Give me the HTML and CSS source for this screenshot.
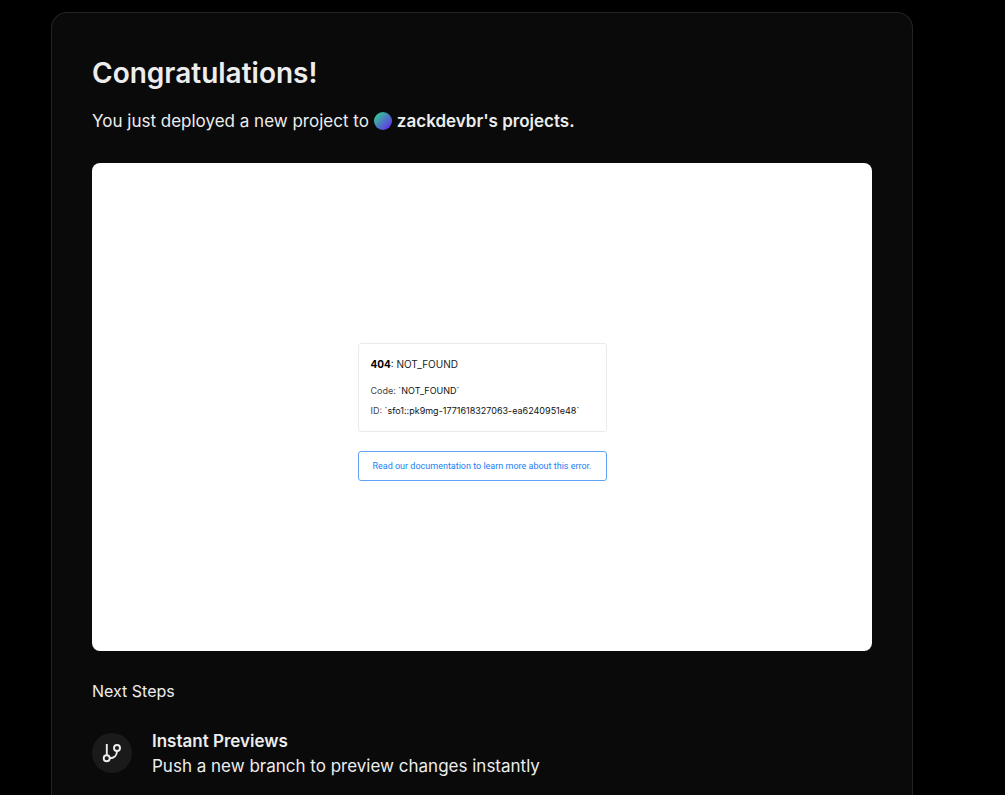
FILE: index.html
```html
<!DOCTYPE html>
<html lang="en">
<head>
<meta charset="utf-8">
<meta name="viewport" content="width=device-width, initial-scale=1">
<title>Congratulations!</title>
<link rel="stylesheet" href="styles.css">
</head>
<body>
<main class="card">
  <h1 class="title">Congratulations!</h1>
  <p class="lead">
    <span>You just deployed a new project to</span>
    <span class="avatar" aria-hidden="true"></span>
    <strong class="team">zackdevbr's projects.</strong>
  </p>
  <section class="preview">
    <div class="error">
      <div class="error-box">
        <p class="error-title"><b>404</b>: NOT_FOUND</p>
        <p class="error-line">Code: <code>`NOT_FOUND`</code></p>
        <p class="error-line">ID: <code>`sfo1::pk9mg-1771618327063-ea6240951e48`</code></p>
      </div>
      <a class="error-link" href="#">Read our documentation to learn more about this error.</a>
    </div>
  </section>
  <h2 class="subtitle">Next Steps</h2>
  <a class="step" href="#">
    <span class="step-icon">
      <svg viewBox="0 0 40 40" width="40" height="40" fill="none" stroke="currentColor" stroke-width="1.9" aria-hidden="true">
        <path d="M14.800 11v11"/>
        <circle cx="14.700" cy="25.200" r="3"/>
        <circle cx="25" cy="15" r="3"/>
        <path d="M17.700 25.200c4.400 0 7.300-2.700 7.300-7.200"/>
      </svg>
    </span>
    <span class="step-text">
      <strong class="step-title">Instant Previews</strong>
      <span>Push a new branch to preview changes instantly</span>
    </span>
  </a>
</main>
</body>
</html>
```
FILE: styles.css
```css
* {
  box-sizing: border-box;
}

body {
  margin: 0;
  height: 100vh;
  padding: 12px 92px 0 51px;
  overflow: hidden;
  display: flex;
  background: #000;
  color: #ededed;
  font-family: Inter, "Liberation Sans", sans-serif;
}

h1, h2, p {
  margin: 0;
}

.card {
  flex: 1;
  min-width: 0;
  padding: 40px 40px 16px;
  background: #0a0a0a;
  border: 1px solid #242424;
  border-bottom: 0;
  border-radius: 16px 16px 0 0;
}

.title {
  font-size: 28px;
  line-height: 40px;
  font-weight: 600;
}

.lead {
  display: flex;
  flex-wrap: wrap;
  align-items: center;
  gap: 5px;
  margin-top: 16px;
  font-size: 17px;
  line-height: 24px;
}

.avatar {
  width: 18px;
  height: 18px;
  border-radius: 50%;
  background: linear-gradient(135deg, #2be08c 0%, #4c7cc0 50%, #6a1cf5 100%);
}

.team, .step-title {
  font-weight: 600;
}

.preview {
  display: flex;
  align-items: center;
  justify-content: center;
  margin-top: 30px;
  aspect-ratio: 16 / 10;
  background: #fff;
  border-radius: 8px;
}

.error {
  display: flex;
  flex-direction: column;
  gap: 19px;
  width: 249px;
  margin-top: 10px;
  color: #222;
}

.error-box {
  padding: 10px 12px;
  border: 1px solid #eaeaea;
  border-radius: 3px;
}

.error-title {
  margin-bottom: 7px;
  font-size: 10px;
  line-height: 20px;
}

.error-title b {
  color: #000;
}

.error-line {
  font-size: 9px;
  line-height: 20px;
  white-space: nowrap;
  color: #444;
}

.error-line code {
  font-family: inherit;
  color: #111;
}

.error-link {
  padding: 0 12px;
  border: 1px solid #5ea3f5;
  border-radius: 3px;
  font-family: Roboto, Inter, sans-serif;
  font-size: 9px;
  line-height: 28px;
  text-align: center;
  white-space: nowrap;
  text-decoration: none;
  color: #1a80f5;
}

.subtitle {
  margin-top: 28px;
  font-size: 16px;
  line-height: 24px;
  font-weight: 400;
}

.step {
  display: flex;
  align-items: center;
  gap: 20px;
  margin-top: 24px;
  color: inherit;
  text-decoration: none;
}

.step-icon {
  display: flex;
  width: 40px;
  height: 40px;
  border-radius: 50%;
  background: #1a1a1a;
}

.step-text {
  display: flex;
  flex-direction: column;
  padding-top: 2px;
  font-size: 17px;
  line-height: 25px;
}
```
